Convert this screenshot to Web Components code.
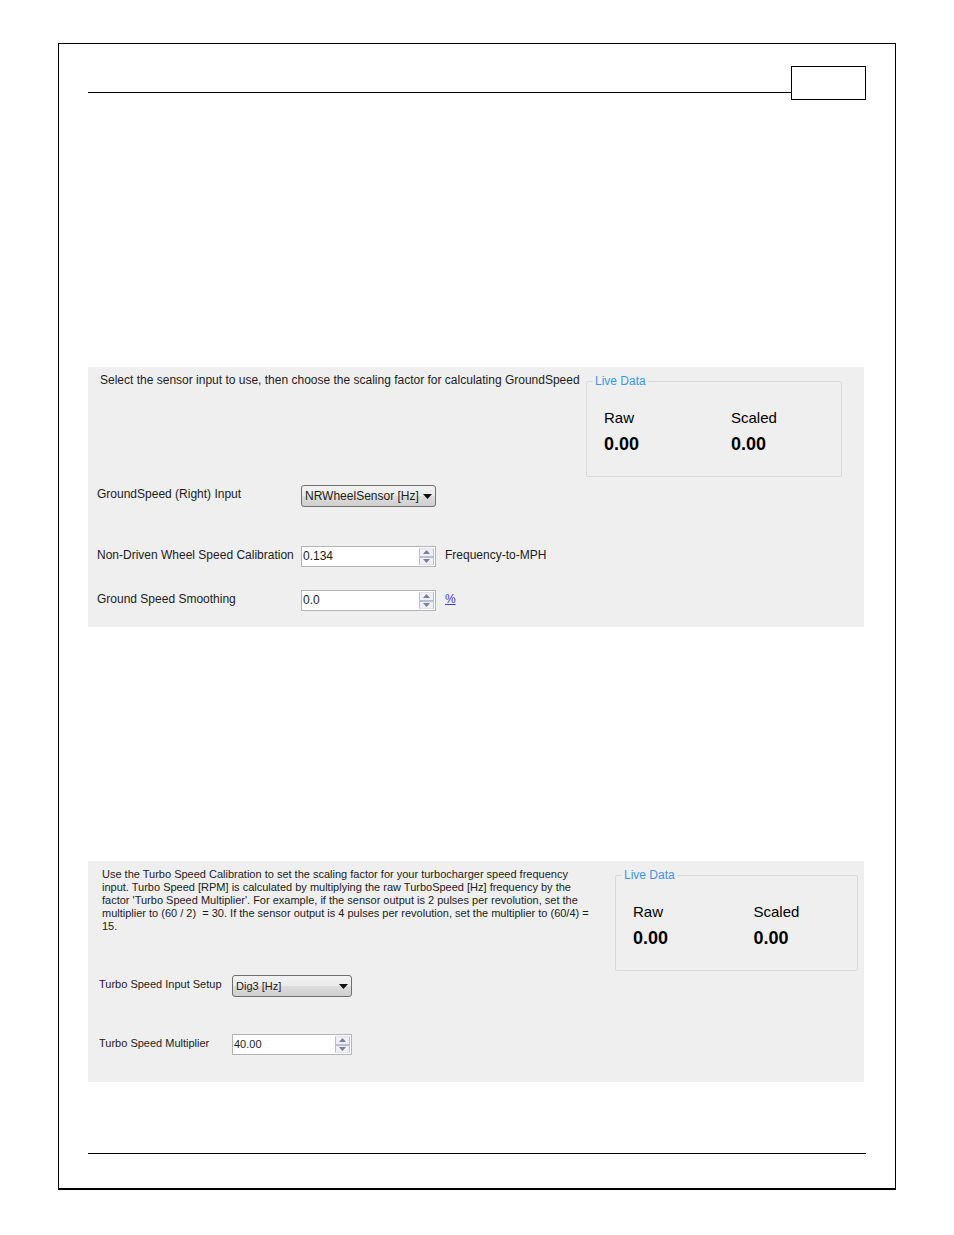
<!DOCTYPE html>
<html lang="en">
<head>
  <meta charset="UTF-8">
  <meta name="viewport" content="width=device-width, initial-scale=1.0">
  <title>Sensor Calibration</title>
  <style>
    body {
      font-family: "Liberation Sans", Arial, sans-serif;
      font-size: 12px;
      margin: 0;
      background: #fff;
      color: #1c1c1c;
    }
    calibration-panel {
      margin-right: 2px;
    }
    .ground {
      --label-width: 204px;
      --control-width: 135px;
      --live-width: 256px;
      --intro-height: 111px;
      --select-gap: 39px;
      margin-top: 267px;
      padding: 7px 22px 15px 9px;
    }
    .turbo {
      --label-width: 133px;
      --control-width: 120px;
      --live-width: 243px;
      --intro-height: 107px;
      --select-gap: 37px;
      margin-top: 234px;
      padding: 7px 6px 26px 11px;
      font-size: 11px;
    }
    sensor-field + sensor-field {
      margin-top: 22px;
    }
    sensor-field[type="select"] + sensor-field {
      margin-top: var(--select-gap);
    }
  </style>
</head>
<body>
  <manual-page>
    <calibration-panel class="ground">
      <span slot="intro">Select the sensor input to use, then choose the scaling factor for calculating GroundSpeed</span>
      <sensor-field type="select" label="GroundSpeed (Right) Input" value="NRWheelSensor [Hz]"></sensor-field>
      <sensor-field type="number" label="Non-Driven Wheel Speed Calibration" value="0.134" step="0.001">Frequency-to-MPH</sensor-field>
      <sensor-field type="number" label="Ground Speed Smoothing" value="0.0" step="0.1"><a href="#percent">%</a></sensor-field>
      <live-data slot="live" raw="0.00" scaled="0.00"></live-data>
    </calibration-panel>

    <calibration-panel class="turbo">
      <span slot="intro">Use the Turbo Speed Calibration to set the scaling factor for your turbocharger speed frequency<br>
        input. Turbo Speed [RPM] is calculated by multiplying the raw TurboSpeed [Hz] frequency by the<br>
        factor 'Turbo Speed Multiplier'. For example, if the sensor output is 2 pulses per revolution, set the<br>
        multiplier to (60 / 2)&nbsp; = 30. If the sensor output is 4 pulses per revolution, set the multiplier to (60/4) =<br>
        15.</span>
      <sensor-field type="select" label="Turbo Speed Input Setup" value="Dig3 [Hz]"></sensor-field>
      <sensor-field type="number" label="Turbo Speed Multiplier" value="40.00" step="0.01"></sensor-field>
      <live-data slot="live" raw="0.00" scaled="0.00"></live-data>
    </calibration-panel>
  </manual-page>

  <script>
    class ManualPage extends HTMLElement {
      constructor() {
        super();
        this.attachShadow({ mode: 'open' });
        this.shadowRoot.innerHTML = /*html*/ `
          <style>
            :host {
              display: block;
              margin: 43px 58px;
              padding: 22px 29px 34px;
              border: 1px solid #000;
              border-bottom-width: 2px;
            }
            header {
              display: flex;
            }
            .line {
              flex: 1;
              height: 26px;
              border-bottom: 1px solid #000;
            }
            .number {
              width: 73px;
              height: 32px;
              border: 1px solid #000;
            }
            footer {
              margin-top: 71px;
              border-top: 1px solid #000;
            }
          </style>
          <header>
            <div class="line"></div>
            <div class="number"></div>
          </header>
          <slot></slot>
          <footer></footer>
        `;
      }
    }

    class CalibrationPanel extends HTMLElement {
      constructor() {
        super();
        this.attachShadow({ mode: 'open' });
        this.shadowRoot.innerHTML = /*html*/ `
          <style>
            :host {
              display: grid;
              grid-template-columns: 1fr var(--live-width);
              align-items: start;
              background: #efefef;
            }
            .intro {
              min-height: var(--intro-height);
              margin: 0;
              padding-left: 3px;
              line-height: 13px;
              white-space: nowrap;
            }
          </style>
          <div>
            <p class="intro"><slot name="intro"></slot></p>
            <slot></slot>
          </div>
          <slot name="live"></slot>
        `;
      }
    }

    class SensorField extends HTMLElement {
      constructor() {
        super();
        this.attachShadow({ mode: 'open' });
      }

      connectedCallback() {
        const isSelect = this.getAttribute('type') === 'select';
        this.shadowRoot.innerHTML = /*html*/ `
          <style>
            :host {
              display: grid;
              grid-template-columns: var(--label-width) var(--control-width) auto;
              grid-template-rows: 22px;
              align-items: start;
              line-height: 19px;
            }
            select, input {
              box-sizing: border-box;
              width: 100%;
              min-width: 0;
              margin: 0;
              font: inherit;
              color: inherit;
              outline: none;
            }
            .select {
              display: grid;
              align-items: center;
            }
            .select > * {
              grid-area: 1 / 1;
            }
            select {
              height: 22px;
              padding: 0 3px;
              appearance: none;
              border: 1px solid #707070;
              border-radius: 3px;
              background: linear-gradient(#f2f2f2 0%, #ebebeb 50%, #dddddd 50%, #cfcfcf 100%);
            }
            .select svg {
              justify-self: end;
              margin-right: 4px;
              pointer-events: none;
            }
            .spinner {
              display: flex;
              box-sizing: border-box;
              height: 21px;
              border: 1px solid #b4b4b8;
              background: #fff;
            }
            input {
              flex: 1;
              height: 19px;
              padding: 0 1px;
              border: 0;
              background: none;
            }
            .buttons {
              display: grid;
              grid-template-rows: 1fr 1fr;
              width: 15px;
              padding: 1px;
            }
            button {
              display: flex;
              align-items: center;
              justify-content: center;
              min-height: 0;
              padding: 0;
              border: 1px solid #b9bed0;
              background: #f0f0f4;
            }
            .up {
              border-top-color: #e2e4ec;
            }
            .down {
              border-bottom-color: #e2e4ec;
            }
            .unit {
              padding-left: 9px;
            }
            ::slotted(a) {
              color: #3a3ae6;
            }
          </style>
          <label for="control">${this.getAttribute('label')}</label>
          ${isSelect ? this.renderSelect() : this.renderSpinner()}
          <span class="unit"><slot></slot></span>
        `;
        if (!isSelect) {
          this.shadowRoot.querySelector('.up').addEventListener('click', () => this.change(1));
          this.shadowRoot.querySelector('.down').addEventListener('click', () => this.change(-1));
        }
      }

      renderSelect() {
        return /*html*/ `
          <div class="select">
            <select id="control"><option>${this.getAttribute('value')}</option></select>
            <svg width="9" height="5" viewBox="0 0 9 5"><path d="M0 0h9L4.500 5z" fill="#111"/></svg>
          </div>
        `;
      }

      renderSpinner() {
        return /*html*/ `
          <div class="spinner">
            <input id="control" type="text" inputmode="decimal" value="${this.getAttribute('value')}">
            <div class="buttons">
              <button class="up" type="button" aria-label="Increase"><svg width="7" height="4" viewBox="0 0 7 4"><path d="M0 4h7L3.500 0z" fill="#7680a6"/></svg></button>
              <button class="down" type="button" aria-label="Decrease"><svg width="7" height="4" viewBox="0 0 7 4"><path d="M0 0h7L3.500 4z" fill="#7680a6"/></svg></button>
            </div>
          </div>
        `;
      }

      change(direction) {
        const input = this.shadowRoot.querySelector('input');
        const step = this.getAttribute('step');
        const decimals = step.split('.')[1].length;
        input.value = (parseFloat(input.value) + direction * parseFloat(step)).toFixed(decimals);
      }
    }

    class LiveData extends HTMLElement {
      constructor() {
        super();
        this.attachShadow({ mode: 'open' });
      }

      connectedCallback() {
        this.shadowRoot.innerHTML = /*html*/ `
          <style>
            :host {
              display: block;
            }
            fieldset {
              display: grid;
              grid-template-columns: 1fr 1fr;
              min-width: 0;
              margin: 0;
              padding: 20px 0 22px;
              border: 1px solid #dadada;
              border-radius: 2px;
            }
            legend {
              margin-left: 6px;
              padding: 0 2px;
              font-size: 12px;
              line-height: 14px;
              color: #3c96f0;
            }
            dl {
              margin: 0;
              padding-left: 17px;
              line-height: 20px;
              color: #000;
            }
            dt {
              font-size: 15px;
            }
            dd {
              margin: 6px 0 0;
              font-size: 18px;
              font-weight: bold;
            }
          </style>
          <fieldset>
            <legend>Live Data</legend>
            <dl><dt>Raw</dt><dd>${this.getAttribute('raw')}</dd></dl>
            <dl><dt>Scaled</dt><dd>${this.getAttribute('scaled')}</dd></dl>
          </fieldset>
        `;
      }
    }

    customElements.define('manual-page', ManualPage);
    customElements.define('calibration-panel', CalibrationPanel);
    customElements.define('sensor-field', SensorField);
    customElements.define('live-data', LiveData);
  </script>
</body>
</html>
